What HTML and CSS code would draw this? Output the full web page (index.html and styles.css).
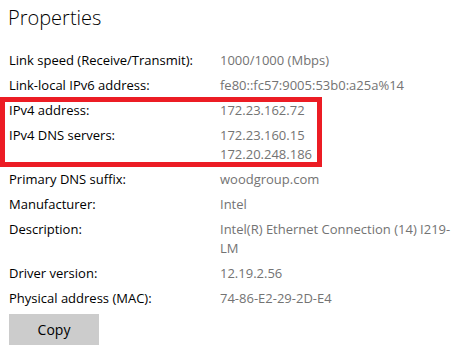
FILE: index.html
```html
<!DOCTYPE html>
<html lang="en">
<head>
<meta charset="utf-8">
<title>Properties</title>
<link rel="stylesheet" href="styles.css">
</head>
<body>
<main class="panel">
  <h1 class="title">Properties</h1>
  <div class="props">
    <div class="row"><div class="label">Link speed (Receive/Transmit):</div><div class="value">1000/1000 (Mbps)</div></div>
    <div class="row"><div class="label">Link-local IPv6 address:</div><div class="value">fe80::fc57:9005:53b0:a25a%14</div></div>
    <div class="highlight">
      <div class="row"><div class="label">IPv4 address:</div><div class="value">172.23.162.72</div></div>
      <div class="row"><div class="label">IPv4 DNS servers:</div><div class="value"><div>172.23.160.15</div><div>172.20.248.186</div></div></div>
    </div>
    <div class="row"><div class="label">Primary DNS suffix:</div><div class="value">woodgroup.com</div></div>
    <div class="row"><div class="label">Manufacturer:</div><div class="value">Intel</div></div>
    <div class="row"><div class="label">Description:</div><div class="value">Intel(R) Ethernet Connection (14) I219-LM</div></div>
    <div class="row"><div class="label">Driver version:</div><div class="value">12.19.2.56</div></div>
    <div class="row"><div class="label">Physical address (MAC):</div><div class="value">74-86-E2-29-2D-E4</div></div>
    <button class="copy" type="button">Copy</button>
  </div>
</main>
</body>
</html>
```
FILE: styles.css
```css
html, body {
  margin: 0;
  padding: 0;
  background: #ffffff;
}

.panel {
  padding: 4px 6px 0 9px;
  font-family: "Open Sans", "Noto Sans", "Liberation Sans", sans-serif;
  color: #000;
}

.title {
  margin: 0 0 19px -1px;
  font-size: 20px;
  line-height: 28px;
  font-weight: 300;
  color: #000;
}

.props {
  display: flex;
  flex-direction: column;
  gap: 6px;
  align-items: flex-start;
}

.highlight {
  position: relative;
  display: flex;
  flex-direction: column;
  gap: 6px;
  align-self: stretch;
}

.highlight::after {
  content: "";
  position: absolute;
  left: -9px;
  top: -4px;
  bottom: -3px;
  width: 322px;
  border: 5px solid #ec1c24;
  box-sizing: border-box;
  pointer-events: none;
}

.row {
  display: grid;
  grid-template-columns: 211px 237px;
  font-size: 13px;
  line-height: 19px;
}

.label {
  color: #000;
}

.value {
  color: #737373;
}

.copy {
  width: 90px;
  height: 31px;
  border: none;
  background: #cccccc;
  color: #000;
  font-family: "Open Sans", "Noto Sans", "Liberation Sans", sans-serif;
  font-size: 14px;
  padding: 0 0 1px 0;
  margin: 0;
}
```
